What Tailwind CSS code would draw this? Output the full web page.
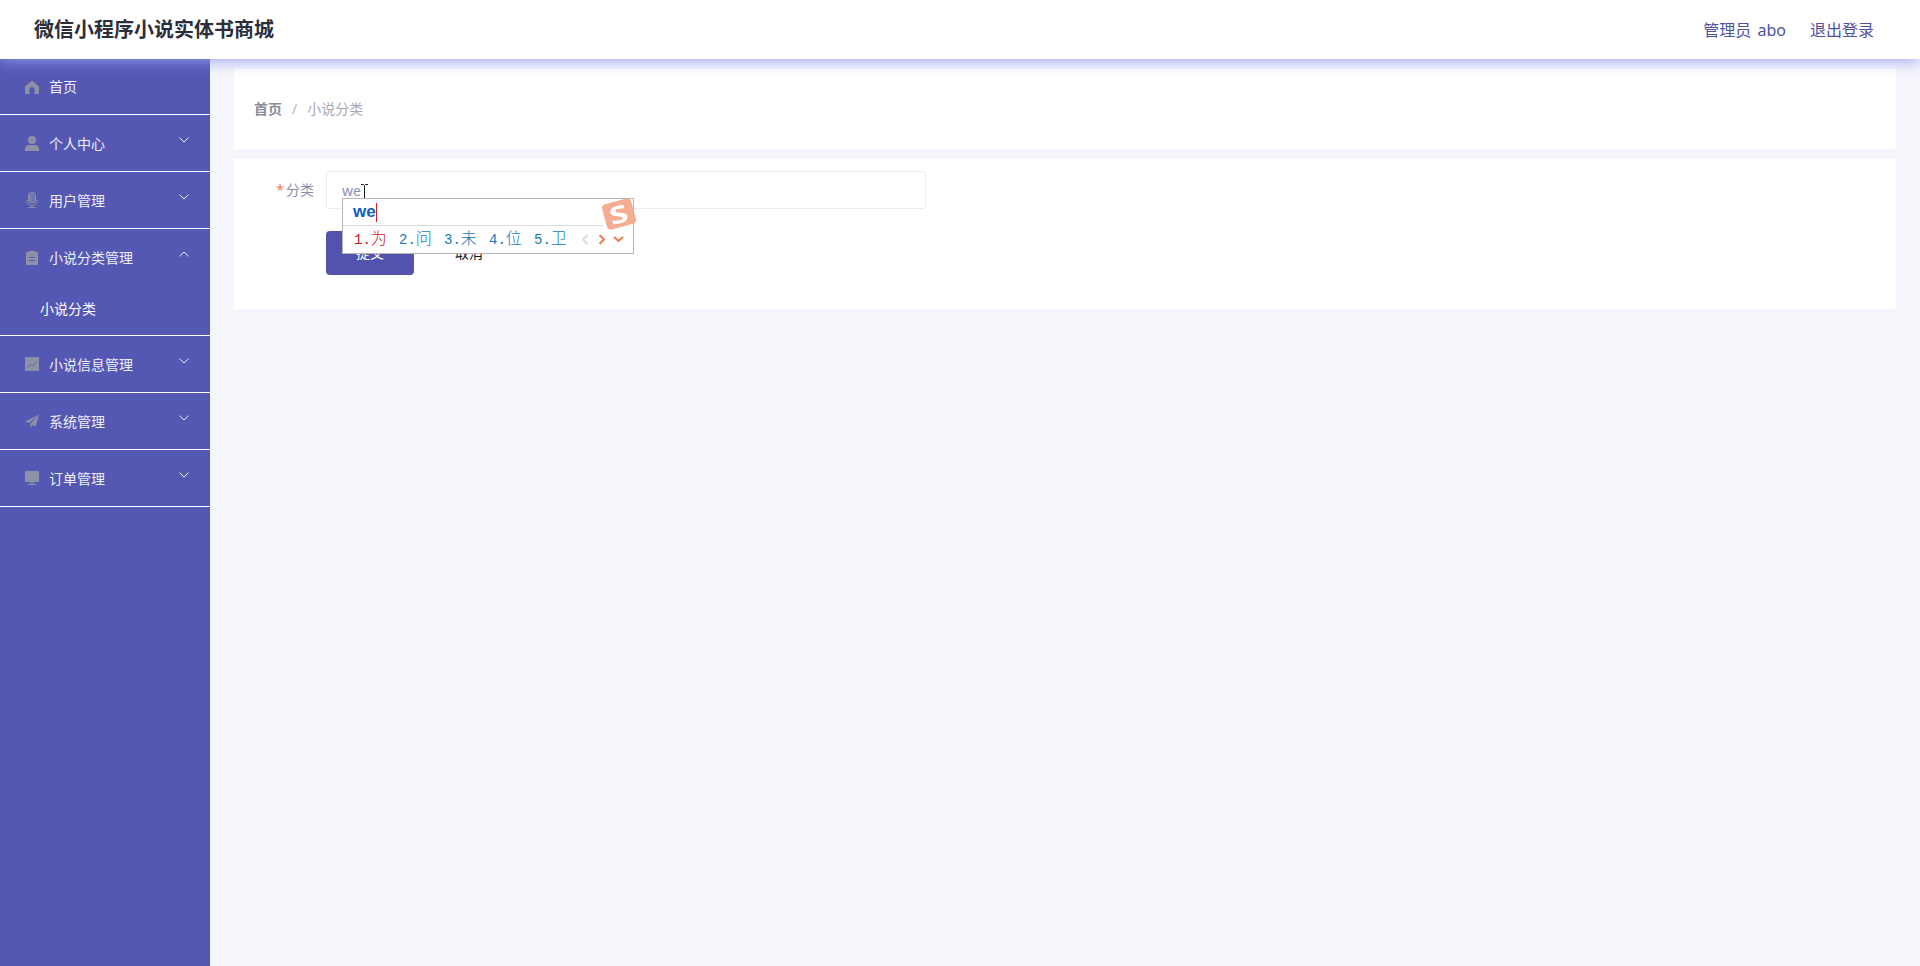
<!DOCTYPE html>
<html lang="zh">
<head>
  <meta charset="UTF-8" />
  <meta name="viewport" content="width=device-width, initial-scale=1.0" />
  <title>小说分类</title>
  <script src="https://cdn.jsdelivr.net/npm/@tailwindcss/browser@4"></script>
</head>
<body class="font-['Noto_Sans','Noto_Sans_CJK_SC',sans-serif] bg-[#f5f6fb] h-[966px] overflow-hidden">

  <!-- top bar -->
  <header class="relative z-10 h-[59px] bg-white flex items-center justify-between pl-[34px] pr-[46px] shadow-[0_2px_14px_rgba(150,155,250,0.9)]">
    <div class="text-[20px] font-bold text-[#2c2f3a]">微信小程序小说实体书商城</div>
    <div class="flex gap-6 text-[16px] text-[#4f529f]">
      <span>管理员 <span class="ml-[2px]">abo</span></span>
      <span>退出登录</span>
    </div>
  </header>

  <div class="flex h-[907px]">
    <!-- sidebar -->
    <aside class="w-[210px] shrink-0 bg-[#5458b3] text-[14px] text-[#eceef8]">
      <div class="h-[55px] flex items-center pl-[25px] border-b border-white box-content">
        <svg class="w-[14px] h-[14px] mr-[10px]" viewBox="0 0 14 14" fill="#8e90a6"><path d="M7 .5 14 6.500V14H9.500V9.500a2.500 2.500 0 0 0-5 0V14H0V6.500z"/></svg>
        <span>首页</span>
      </div>
      <div class="h-[56px] flex items-center pl-[25px] pr-[21px] border-b border-white box-content">
        <svg class="w-[14px] h-[15px] mr-[10px]" viewBox="0 0 14 15" fill="#8e90a6"><circle cx="7" cy="4" r="4"/><path d="M0 15v-2.500C0 10 2.500 9 4 9h6c1.500 0 4 1 4 3.500V15z"/></svg>
        <span class="flex-1">个人中心</span>
        <svg class="w-[10px] h-[6px] mb-[7px]" viewBox="0 0 10 6" fill="none" stroke="#eceef8" stroke-width="1"><path d="M.5.7 5 5 9.500.7"/></svg>
      </div>
      <div class="h-[56px] flex items-center pl-[25px] pr-[21px] border-b border-white box-content">
        <svg class="w-[14px] h-[16px] mr-[10px]" viewBox="0 0 14 16" fill="none" stroke="#8e90a6" stroke-width="1"><rect x="3.500" y=".5" width="7" height="10.500" rx="3" fill="#8e90a6" fill-opacity=".5"/><path d="M3.500 4h3M3.500 6h3M3.500 8h3M2 8v1.500a5 4 0 0 0 10 0V8M7 13.500V15M3.500 15.500h7"/></svg>
        <span class="flex-1">用户管理</span>
        <svg class="w-[10px] h-[6px] mb-[7px]" viewBox="0 0 10 6" fill="none" stroke="#eceef8" stroke-width="1"><path d="M.5.7 5 5 9.500.7"/></svg>
      </div>
      <div class="h-[106px] border-b border-white box-content">
        <div class="h-[56px] flex items-center pl-[25px] pr-[21px]">
          <svg class="w-[14px] h-[15px] mr-[10px]" viewBox="0 0 14 15" fill="#8e90a6"><path d="M1 2h3V.8h6V2h3v13H1z"/><path d="M4 7.500h6M4 10.500h6" stroke="#5458b3" stroke-width="1"/></svg>
          <span class="flex-1">小说分类管理</span>
          <svg class="w-[10px] h-[6px] mb-[7px]" viewBox="0 0 10 6" fill="none" stroke="#eceef8" stroke-width="1"><path d="M.5 5.300 5 1l4.500 4.300"/></svg>
        </div>
        <div class="h-[50px] flex items-center pl-[40px] pb-[4px] text-white">小说分类</div>
      </div>
      <div class="h-[56px] flex items-center pl-[25px] pr-[21px] border-b border-white box-content">
        <svg class="w-[14px] h-[14px] mr-[10px]" viewBox="0 0 14 14" fill="#8e90a6"><rect width="14" height="14"/><path d="M2.500 10.500 6 7.500l2 1.500 3.500-4.500" fill="none" stroke="#6668ad" stroke-width="1"/></svg>
        <span class="flex-1">小说信息管理</span>
        <svg class="w-[10px] h-[6px] mb-[7px]" viewBox="0 0 10 6" fill="none" stroke="#eceef8" stroke-width="1"><path d="M.5.7 5 5 9.500.7"/></svg>
      </div>
      <div class="h-[56px] flex items-center pl-[25px] pr-[21px] border-b border-white box-content">
        <svg class="w-[14px] h-[14px] mr-[10px]" viewBox="0 0 14 14" fill="#8e90a6"><path d="M14 .5 0 7.500l4 1.500L14 .5 5.500 9.500 5 14l2.500-3 3 1.500z"/></svg>
        <span class="flex-1">系统管理</span>
        <svg class="w-[10px] h-[6px] mb-[7px]" viewBox="0 0 10 6" fill="none" stroke="#eceef8" stroke-width="1"><path d="M.5.7 5 5 9.500.7"/></svg>
      </div>
      <div class="h-[56px] flex items-center pl-[25px] pr-[21px] border-b border-white box-content">
        <svg class="w-[14px] h-[14px] mr-[10px]" viewBox="0 0 14 14" fill="#8e90a6"><rect width="14" height="11"/><path d="M5 11.500h4v1H5zM3 13h8v1H3z"/></svg>
        <span class="flex-1">订单管理</span>
        <svg class="w-[10px] h-[6px] mb-[7px]" viewBox="0 0 10 6" fill="none" stroke="#eceef8" stroke-width="1"><path d="M.5.7 5 5 9.500.7"/></svg>
      </div>
    </aside>

    <!-- content -->
    <main class="flex-1 pt-[10px] pl-[24px] pr-[24px] flex flex-col gap-[10px]">
      <div class="h-[80px] bg-white flex items-center pl-[20px] pb-[2px] text-[14px]">
        <span class="font-bold text-[#8a8d9b]">首页</span>
        <span class="mx-[10px] text-[#b4b7c0]">/</span>
        <span class="text-[#a5a8b8]">小说分类</span>
      </div>
      <div class="h-[150px] bg-white pt-[12px]">
        <div class="flex items-center">
          <label class="w-[92px] pr-[12px] pb-[2px] text-right text-[14px] text-[#8b8ea8]"><span class="text-[#f0795f] mr-[2px]">*</span>分类</label>
          <div class="relative w-[600px] h-[38px] border border-[#ebecf5] rounded-[3px] pl-[15px] flex items-center text-[14px] text-[#8f90b5]">
            we
            <!-- text cursor -->
            <svg class="absolute left-[33px] top-[12px] w-[9px] h-[17px]" viewBox="0 0 9 17" fill="none" stroke="#111" stroke-width="1"><path d="M1 .5h2.500L4.500 1.500 5.500.5H8M4.500 1.500v14M1 16.500h2.500l1-1 1 1H8"/></svg>
            <!-- IME popup -->
            <div class="absolute z-20 left-[15px] top-[26px] w-[292px] h-[56px] bg-white border border-[#b5b5b8]">
              <div class="h-[27px] w-[260px] border-b border-[#dddddd] flex items-center pl-[10px]">
                <span class="font-['Liberation_Sans'] font-bold text-[17px] text-[#0b5fc0]">we</span>
                <span class="w-px h-[19px] bg-[#c22]"></span>
              </div>
              <div class="h-[27px] flex items-center pl-[11px] text-[16px] font-['Liberation_Mono','Noto_Sans_CJK_SC',monospace] font-light text-[#1777b5]">
                <span class="w-[45px] text-[#c8141c]"><span class="text-[14px]">1.</span>为</span>
                <span class="w-[45px]"><span class="text-[14px]">2.</span>问</span>
                <span class="w-[45px]"><span class="text-[14px]">3.</span>未</span>
                <span class="w-[45px]"><span class="text-[14px]">4.</span>位</span>
                <span class="w-[47px]"><span class="text-[14px]">5.</span>卫</span>
                <svg class="w-[8px] h-[11px] mr-[9px]" viewBox="0 0 8 11" fill="none" stroke="#dcdcdc" stroke-width="2"><path d="M6.500 1 2 5.500 6.500 10"/></svg>
                <svg class="w-[8px] h-[11px] mr-[7px]" viewBox="0 0 8 11" fill="none" stroke="#ee7b4d" stroke-width="2"><path d="M1.500 1 6 5.500 1.500 10"/></svg>
                <svg class="w-[11px] h-[7px]" viewBox="0 0 11 7" fill="none" stroke="#ee7b4d" stroke-width="2"><path d="M1 1l4.500 4L10 1"/></svg>
              </div>
              <!-- sogou mark -->
              <div class="absolute -right-px top-[2px] w-[30px] h-[26px] -rotate-[15deg] rounded-[4px] bg-[#f4ad93] flex items-center justify-center text-white font-bold text-[24px] leading-none"><span class="scale-x-[1.4]">S</span></div>
            </div>
          </div>
        </div>
        <div class="flex items-center mt-[22px] ml-[92px]">
          <button class="w-[88px] h-[44px] pb-[2px] bg-[#5353ad] rounded-[4px] text-white text-[14px]">提交</button>
          <button class="ml-[41px] pb-[2px] text-[14px] text-[#111]">取消</button>
        </div>
      </div>
    </main>
  </div>
</body>
</html>
